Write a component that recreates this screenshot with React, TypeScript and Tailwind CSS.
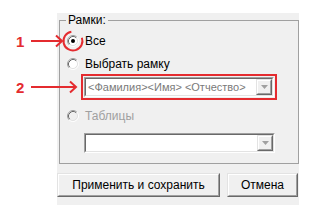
import React from "react";

const RED = "#e42b2f";

function Radio({ checked = false, disabled = false }: { checked?: boolean; disabled?: boolean }) {
  return (
    <svg width="12" height="12" viewBox="0 0 12 12" className="shrink-0">
      <circle cx="6" cy="6" r="4.5" fill={disabled ? "#f0f0f0" : "#ffffff"} />
      <path d="M2.11 9.89 A5.5 5.5 0 0 1 9.89 2.11" fill="none" stroke="#a0a0a0" />
      <path d="M9.89 2.11 A5.5 5.5 0 0 1 2.11 9.89" fill="none" stroke="#ffffff" />
      <path d="M2.82 9.18 A4.5 4.5 0 0 1 9.18 2.82" fill="none" stroke="#696969" />
      <path d="M9.18 2.82 A4.5 4.5 0 0 1 2.82 9.18" fill="none" stroke="#e3e3e3" />
      {checked && <circle cx="6" cy="6" r="2" fill="#000" />}
    </svg>
  );
}

function Combo({ text, disabled = false }: { text?: string; disabled?: boolean }) {
  return (
    <div className="h-full border border-t-[#a0a0a0] border-l-[#a0a0a0] border-b-white border-r-white">
      <div className="flex h-full border border-t-[#696969] border-l-[#696969] border-b-[#e3e3e3] border-r-[#e3e3e3] bg-white">
        <div
          className={
            "flex-1 min-w-0 overflow-hidden flex items-center pl-[2px] whitespace-nowrap text-[11px] " +
            (disabled ? "text-[#7a7a7a]" : "")
          }
        >
          {text}
        </div>
        <div className="w-[16px] h-full border border-t-[#e3e3e3] border-l-[#e3e3e3] border-b-[#696969] border-r-[#696969]">
          <div className="flex items-center justify-center h-full bg-[#f0f0f0] border border-t-white border-l-white border-b-[#a0a0a0] border-r-[#a0a0a0]">
            <svg width="7" height="4" viewBox="0 0 7 4">
              <polygon points="0,0 7,0 3.5,4" fill="#a0a0a0" />
            </svg>
          </div>
        </div>
      </div>
    </div>
  );
}

function WinButton({ label, width }: { label: string; width: string }) {
  return (
    <button
      type="button"
      className={
        width +
        " h-[24px] border border-t-[#e3e3e3] border-l-[#e3e3e3] border-b-[#696969] border-r-[#696969]"
      }
    >
      <div className="flex items-center justify-center h-full bg-[#f0f0f0] border border-t-white border-l-white border-b-[#a0a0a0] border-r-[#a0a0a0]">
        {label}
      </div>
    </button>
  );
}

export default function App() {
  return (
    <div className="relative w-[310px] h-[220px] overflow-hidden bg-white font-['Liberation_Sans',Arial,sans-serif] text-[12px] leading-[14px] text-black">
      <div className="ml-[57px] mt-[13px] w-[242px] bg-[#f0f0f0] pb-[8px]">
        <fieldset className="ml-[2px] w-[240px] border border-[#a0a0a0] pb-[10px]">
          <legend className="ml-[6px] px-[2px] h-[14px]">Рамки:</legend>
          <div className="flex flex-col pl-[7px]">
            <div className="mt-[7px] h-[14px] flex items-center gap-[6px]">
              <Radio checked />
              <span>Все</span>
            </div>
            <div className="mt-[9px] h-[14px] flex items-center gap-[6px]">
              <Radio />
              <span>Выбрать рамку</span>
            </div>
            <div className="mt-[3px] ml-[14px] w-[196px] h-[26px] border-2 border-[#e42b2f] p-[1px]">
              <Combo text="<Фамилия><Имя> <Отчество>" disabled />
            </div>
            <div className="mt-[9px] h-[14px] flex items-center gap-[6px] text-[#a0a0a0]">
              <Radio disabled />
              <span>Таблицы</span>
            </div>
            <div className="mt-[10px] ml-[17px] w-[191px] h-[20px]">
              <Combo />
            </div>
          </div>
        </fieldset>
        <div className="flex gap-[7px] mt-[9px]">
          <WinButton label="Применить и сохранить" width="w-[163px]" />
          <WinButton label="Отмена" width="w-[71px]" />
        </div>
      </div>

      {/* пометки поверх скриншота */}
      <svg className="absolute inset-0 pointer-events-none" width="310" height="220" viewBox="0 0 310 220">
        <text x="16" y="47" fill={RED} fontSize="15" fontWeight="bold" fontFamily="Liberation Sans, Arial, sans-serif">
          1
        </text>
        <line x1="31" y1="41" x2="62" y2="41" stroke={RED} strokeWidth="2" />
        <polyline points="56,35.5 62,41 56,46.5" fill="none" stroke={RED} strokeWidth="2" />
        <path d="M81.9 37.75 A9.5 9.5 0 1 1 71.35 31.64" fill="none" stroke={RED} strokeWidth="2" />

        <text x="16" y="93" fill={RED} fontSize="15" fontWeight="bold" fontFamily="Liberation Sans, Arial, sans-serif">
          2
        </text>
        <line x1="31" y1="87" x2="76" y2="87" stroke={RED} strokeWidth="2" />
        <polyline points="70,81.5 76,87 70,92.5" fill="none" stroke={RED} strokeWidth="2" />
      </svg>
    </div>
  );
}
